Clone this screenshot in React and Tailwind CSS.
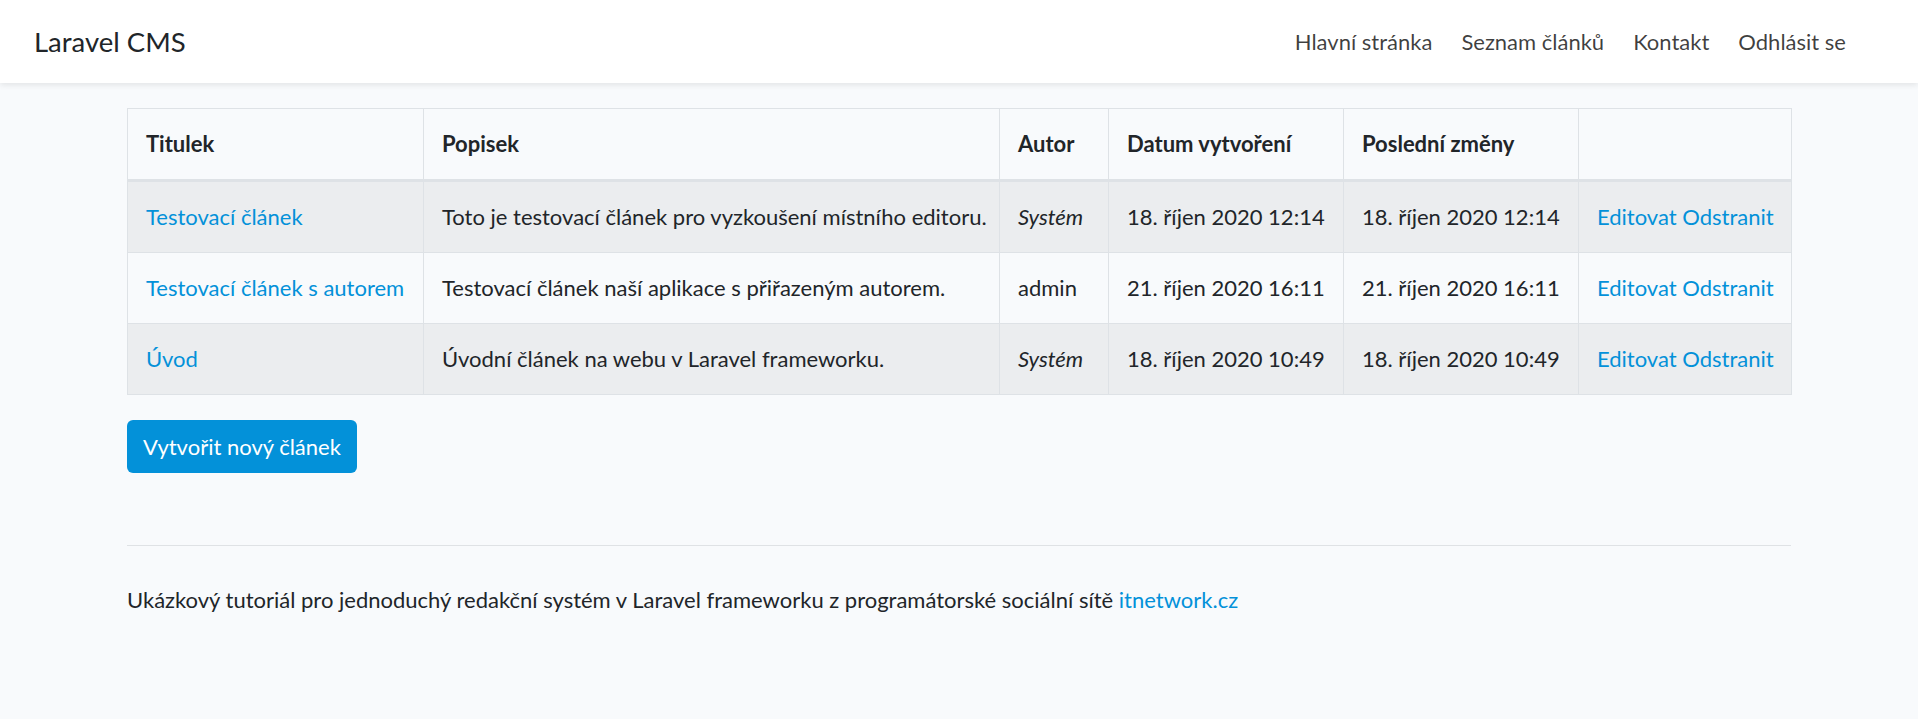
import React from "react";

const rows = [
  {
    title: "Testovací článek",
    desc: "Toto je testovací článek pro vyzkoušení místního editoru.",
    author: "Systém",
    italic: true,
    created: "18. říjen 2020 12:14",
    updated: "18. říjen 2020 12:14",
  },
  {
    title: "Testovací článek s autorem",
    desc: "Testovací článek naší aplikace s přiřazeným autorem.",
    author: "admin",
    italic: false,
    created: "21. říjen 2020 16:11",
    updated: "21. říjen 2020 16:11",
  },
  {
    title: "Úvod",
    desc: "Úvodní článek na webu v Laravel frameworku.",
    author: "Systém",
    italic: true,
    created: "18. říjen 2020 10:49",
    updated: "18. říjen 2020 10:49",
  },
];

const cell = "border border-[#dee2e6] px-[18px] py-[18px] align-top whitespace-nowrap";

export default function App() {
  return (
    <div
      className="min-h-[719px] bg-[#f8fafc] text-[#212529] text-[22px] leading-[34px]"
      style={{ fontFamily: "Lato, 'Noto Sans', sans-serif" }}
    >
      <nav className="h-[83px] bg-white shadow-[0_2px_6px_rgba(0,0,0,0.09)] flex items-center justify-between pl-[34px] pr-[72px]">
        <a className="text-[27.5px] text-[#212529]">Laravel CMS</a>
        <ul className="flex items-center gap-[29px] text-[rgba(0,0,0,0.75)]">
          <li>Hlavní stránka</li>
          <li>Seznam článků</li>
          <li>Kontakt</li>
          <li>Odhlásit se</li>
        </ul>
      </nav>

      <main className="w-[1664px] mx-auto pt-[25px]">
        <table className="w-[1664px] border-collapse table-fixed">
          <colgroup>
            <col className="w-[296px]" />
            <col className="w-[576px]" />
            <col className="w-[109px]" />
            <col className="w-[235px]" />
            <col className="w-[235px]" />
            <col className="w-[213px]" />
          </colgroup>
          <thead>
            <tr>
              {["Titulek", "Popisek", "Autor", "Datum vytvoření", "Poslední změny", ""].map((h, i) => (
                <th
                  key={i}
                  className={`${cell} border-b-[3px] text-left font-bold`}
                >
                  {h}
                </th>
              ))}
            </tr>
          </thead>
          <tbody>
            {rows.map((r, i) => (
              <tr key={i} className={i % 2 === 0 ? "bg-[#ebedef]" : ""}>
                <td className={cell}>
                  <a className="text-[#0391d9]">{r.title}</a>
                </td>
                <td className={cell}>{r.desc}</td>
                <td className={`${cell} ${r.italic ? "italic" : ""}`}>{r.author}</td>
                <td className={cell}>{r.created}</td>
                <td className={cell}>{r.updated}</td>
                <td className={`${cell} text-[#0391d9]`}>
                  <a>Editovat</a> <a>Odstranit</a>
                </td>
              </tr>
            ))}
          </tbody>
        </table>

        <button className="mt-[25px] h-[53px] px-[16px] rounded-[6px] bg-[#0391d9] text-white">
          Vytvořit nový článek
        </button>

        <hr className="mt-[72px] border-0 border-t border-[#dfe2e5]" />

        <p className="mt-[37px]">
          Ukázkový tutoriál pro jednoduchý redakční systém v Laravel frameworku z programátorské sociální sítě{" "}
          <a className="text-[#0391d9]">itnetwork.cz</a>
        </p>
      </main>
    </div>
  );
}
